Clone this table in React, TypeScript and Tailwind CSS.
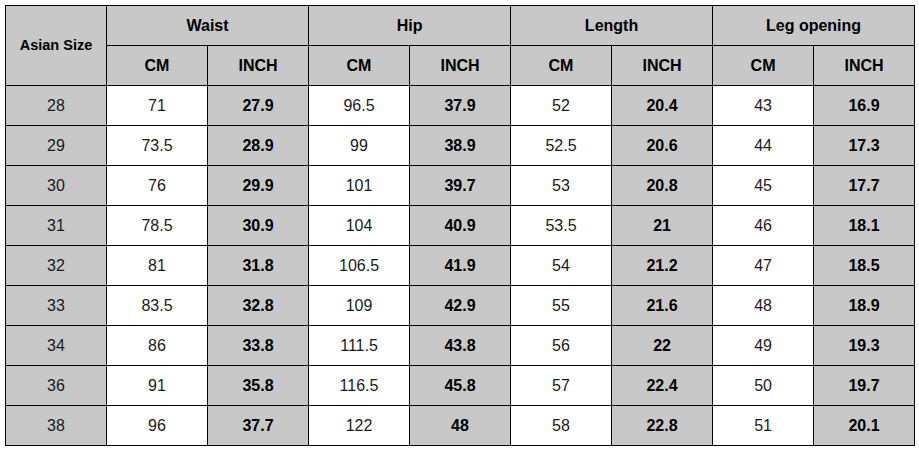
import { Fragment } from "react";

const groups = ["Waist", "Hip", "Length", "Leg opening"];

const rows: string[][] = [
  ["28", "71", "27.9", "96.5", "37.9", "52", "20.4", "43", "16.9"],
  ["29", "73.5", "28.9", "99", "38.9", "52.5", "20.6", "44", "17.3"],
  ["30", "76", "29.9", "101", "39.7", "53", "20.8", "45", "17.7"],
  ["31", "78.5", "30.9", "104", "40.9", "53.5", "21", "46", "18.1"],
  ["32", "81", "31.8", "106.5", "41.9", "54", "21.2", "47", "18.5"],
  ["33", "83.5", "32.8", "109", "42.9", "55", "21.6", "48", "18.9"],
  ["34", "86", "33.8", "111.5", "43.8", "56", "22", "49", "19.3"],
  ["36", "91", "35.8", "116.5", "45.8", "57", "22.4", "50", "19.7"],
  ["38", "96", "37.7", "122", "48", "58", "22.8", "51", "20.1"],
];

const cell = "border border-black text-center align-middle h-[40px] p-0";
const head = cell + " bg-[#c8c8c8] font-bold text-black";

export default function App() {
  return (
    <div
      className="w-[919px] h-[450px] bg-white pt-[5px] pl-[5px]"
      style={{ fontFamily: '"Liberation Sans", Arial, sans-serif' }}
    >
      <table className="table-fixed border-collapse w-[910px] text-[16px] text-[#1a1a1a]">
        <colgroup>
          {Array.from({ length: 9 }).map((_, i) => (
            <col key={i} className="w-[101px]" />
          ))}
        </colgroup>
        <thead>
          <tr>
            <th rowSpan={2} className={head + " text-[14.5px]"}>
              Asian Size
            </th>
            {groups.map((g) => (
              <th key={g} colSpan={2} className={head}>
                {g}
              </th>
            ))}
          </tr>
          <tr>
            {groups.map((g) => (
              <Fragment key={g}>
                <th className={head}>CM</th>
                <th className={head}>INCH</th>
              </Fragment>
            ))}
          </tr>
        </thead>
        <tbody>
          {rows.map((r) => (
            <tr key={r[0]}>
              {r.map((v, i) => {
                const gray = i % 2 === 0;
                const bold = i > 0 && i % 2 === 0;
                return (
                  <td
                    key={i}
                    className={
                      cell +
                      (gray ? " bg-[#c8c8c8]" : " bg-white") +
                      (bold ? " font-bold text-black" : "")
                    }
                  >
                    {v}
                  </td>
                );
              })}
            </tr>
          ))}
        </tbody>
      </table>
    </div>
  );
}
